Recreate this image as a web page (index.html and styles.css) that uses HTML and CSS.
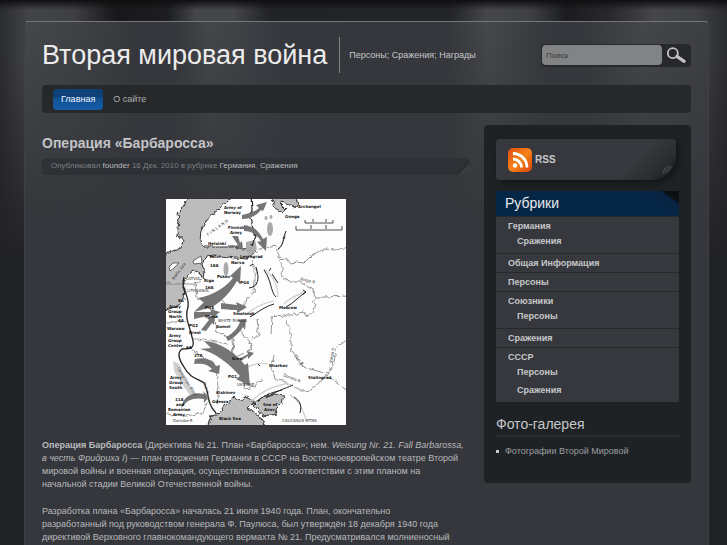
FILE: index.html
```html
<!DOCTYPE html>
<html lang="ru">
<head>
<meta charset="utf-8">
<title>Вторая мировая война</title>
<link rel="stylesheet" href="styles.css">
</head>
<body>
<div class="page">
  <header class="header">
    <h1 class="site-title">Вторая мировая война</h1>
    <p class="tagline">Персоны; Сражения; Награды</p>
    <form class="search">
      <input class="search-input" type="text" placeholder="Поиск" aria-label="Поиск">
      <button class="search-button" type="button" aria-label="Найти">
        <svg width="22" height="18" viewBox="0 0 22 18"><circle cx="7.500" cy="7" r="5.500" fill="none" stroke="#c2c3c5" stroke-width="2"/><path d="M12 10.500L20 16" stroke="#c2c3c5" stroke-width="3.400" stroke-linecap="round"/></svg>
      </button>
    </form>
  </header>
  <nav class="nav">
    <a class="nav-link active" href="#">Главная</a>
    <a class="nav-link" href="#">О сайте</a>
  </nav>
  <div class="columns">
    <main class="main">
      <h2 class="post-title">Операция «Барбаросса»</h2>
      <p class="meta">Опубликовал <a href="#">founder</a> 16 Дек. 2010 в рубрике <a href="#">Германия</a>, <a href="#">Сражения</a></p>
      <svg class="map" width="180" height="226" viewBox="0 0 180 226" role="img" aria-label="Карта">
        <defs><filter id="rough" filterUnits="userSpaceOnUse" x="0" y="0" width="180" height="226"><feTurbulence type="fractalNoise" baseFrequency=".2" numOctaves="2" seed="4"/><feDisplacementMap in="SourceGraphic" scale="5" xChannelSelector="R" yChannelSelector="G"/></filter></defs>
        <rect width="180" height="226" fill="#fdfdfd"/>
        <g filter="url(#rough)" fill="#bcbcbc" stroke="#222" stroke-width=".9">
          <path d="M22 -4L18 8 12 14 13 24 11 33 17 42 15 49 5 53 -4 57V112L10 108 18 101 19 90 17 86 21 77 27 72 34 75 37 80 38 72 36 65 41 57 48 56 69 59 81 60 89 53V48L77 50 68 48 38 48 34 42 35 31 41 20 53 10 69 -4Z"/>
          <path d="M41 230L45 216 54 214 59 207 67 198 74 202 80 198 88 203 82 209 92 216 101 230Z"/>
          <path d="M88 206L96 198 108 195 118 196 116 204 110 210 111 215 97 217Z"/>
          <path d="M105 -4L109 9 117 14 120 10 113 3 120 4 128 8 132 6 129 -4Z"/>
        </g>
        <g fill="#fdfdfd" stroke="#333" stroke-width=".7"><path d="M3 68L7 64 13 64 8 69 4 72ZM27 62L35 57 36 64 28 65Z"/></g>
        <g fill="#aaa"><ellipse cx="60" cy="70" rx="2.500" ry="7"/><ellipse cx="104" cy="30" rx="3" ry="7"/><ellipse cx="100" cy="19" rx="1.500" ry="2"/><ellipse cx="105" cy="18" rx="1.500" ry="2"/><path d="M80 43L89 41 91 50 85 56 80 52Z"/></g>
        <path d="M7 162L13 165 19 180 29 196 26 199 16 185 8 172Z" fill="#d0d0d0"/>
        <g filter="url(#rough)" fill="none" stroke="#777" stroke-width=".8">
          <path d="M91 54L97 47 105 48 110 47 114 61 120 59 123 65 130 63 138 64 145 57 157 50 169 51 182 48M114 61L117 69 115 76 122 82 133 82 145 89 150 98 160 98 182 97M121 122L125 138 125 150 137 168 155 173 165 180 182 192M182 140L170 149 168 164 158 179 145 191 137 192 120 184 109 180 105 168 108 157M0 85H29L35 80M29 85L31 99 45 105 49 94 51 103 56 102 63 110 77 111 81 99 88 93 90 72 86 61M0 123H20M46 105L51 133 68 140 67 156M26 139L62 145M60 158L80 169 78 190 88 188 95 180M150 98L147 113 141 118 138 112 127 116 118 116 106 118 105 136M91 120L93 135 84 143 86 150 70 158M66 137L67 160M74 132L86 145M27 152L48 165 53 186 51 205M43 198L37 214 20 217 0 215"/>
        </g>
        <path filter="url(#rough)" d="M85 -3L86 10 84 19 90 37 86 47" fill="none" stroke="#222" stroke-width="1.200"/>
        <path d="M18 78C14 90 24 96 22 108C18 118 24 128 26 138C30 150 24 150 16 150C10 154 14 162 18 168C24 180 34 180 38 184C44 194 40 204 50 214" fill="none" stroke="#222" stroke-width="1.300"/>
        <g fill="none" stroke="#ccc" stroke-width="1.200"><path d="M86 92C92 84 89 74 86 65M98 70C106 76 112 86 112 98M80 116C88 108 98 104 108 102M118 105C124 98 132 96 138 93M112 52L120 36M80 169C88 164 96 164 102 165M86 202C100 188 110 188 122 184M124 196C134 202 136 210 140 220"/></g>
        <g fill="none" stroke="#222" stroke-width="1">
          <path d="M83 89C92 88 94 80 90 68M98 71C106 82 104 92 110 98M106 75L112 84M84 118C94 112 98 108 108 105M120 108C128 104 132 98 140 93M112 50C118 46 116 42 119 38M86 206C98 196 104 194 116 191M100 199C110 192 118 190 127 186M128 198C134 202 136 206 134 214M105 69L103 72M87 65L84 67M137 91L140 93 137 95M92 165L94 167M120 32L117 40"/>
          <path d="M139 21V24H167V21M147 23V20M160 23V20M130 27V31H176V27M145 30V26M160 30V26" stroke-width=".8"/>
        </g>
        <g fill="#757575">
          <path d="M76 16C84 14 90 12 93 9L90 6 101 3 97 12 95 11C90 17 84 20 76 20Z"/><path d="M78 26C90 28 94 34 97 40L101 38 100 52 91 43 95 42C91 36 86 32 78 32Z"/>
          <path d="M66 37L72 46 69 47 77 51 76 42 74 44 72 37Z"/><path d="M32 99C48 96 60 88 67 79L64 77 75 67 74 85 71 82C64 94 56 102 46 108L28 113 38 103Z"/>
          <path d="M55 104L71 106 70 103 81 108 71 114 71 111 55 110Z"/><path d="M35 131L43 121 41 119 49 117 48 126 46 124 40 132Z"/>
          <path d="M60 138C68 134 72 128 74 123L71 121 80 120 79 131 77 128C73 134 69 138 62 142Z"/><path d="M28 113L45 113 44 110 54 113 46 119 46 116 28 120Z"/>
          <path d="M38 142C52 142 70 154 79 166L82 164 84 187 70 180 74 177C62 164 50 154 34 150L45 149Z"/>
          <path d="M29 160C38 158 46 160 50 167L54 166 53 175 42 172 46 170C42 165 36 164 28 165Z"/><path d="M15 209C17 197 27 192 38 195L37 192 43 198 38 204 38 200C28 198 21 201 17 207Z"/><path d="M73 160L82 155 81 152 88 154 82 160 82 157 75 162Z"/>
        </g>
        <g class="map-bold">
          <text x="58" y="10">Army of</text><text x="58" y="15">Norway</text><text x="62" y="30">Finnish</text><text x="64" y="35">Army</text>
          <text x="42" y="46">Helsinki</text><text x="43" y="59">Tallin</text><text x="65" y="65">Narva</text><text x="74" y="59">Leningrad</text><text x="44" y="68">18A</text><text x="74" y="85">PG4</text><text x="51" y="79">Pskov</text><text x="38" y="83">Riga</text><text x="39" y="90">16A</text>
          <text x="12" y="103">9A</text><text x="3" y="109">Army</text><text x="2" y="114">Group</text><text x="3" y="119">North</text><text x="12" y="123">4A</text><text x="23" y="128">PG2</text><text x="39" y="110">PG3</text><text x="39" y="119">Minsk</text><text x="67" y="116">Smolensk</text><text x="50" y="129">Gomel</text><text x="1" y="131">Warsaw</text><text x="3" y="138">Army</text><text x="2" y="143">Group</text><text x="2" y="148">Center</text><text x="23" y="135">Brest</text>
          <text x="20" y="150">6A</text><text x="28" y="158">17A</text><text x="66" y="161">Kiev</text><text x="4" y="180">Army</text><text x="3" y="185">Group</text><text x="3" y="190">South</text><text x="9" y="202">11A</text><text x="10" y="207">and</text><text x="2" y="212">Romanian</text><text x="7" y="217">Army</text>
          <text x="62" y="179">PG1</text><text x="50" y="195">Kishinev</text><text x="46" y="204">Odessa</text><text x="53" y="221">Black Sea</text><text x="97" y="207">Sea of</text><text x="98" y="212">Azov</text><text x="113" y="110">Moscow</text><text x="103" y="168">Kharkov</text><text x="142" y="180">Stalingrad</text><text x="132" y="9">Archangel</text><text x="119" y="19">Onega</text>
        </g>
        <g class="map-thin">
          <text x="42" y="37" transform="rotate(-35 42 37)">F  I  N  L  A  N  D</text><text x="8" y="81" transform="rotate(-53 8 81)">Baltic Sea</text><text x="20" y="81">LATVIA</text><text x="21" y="93">LITHUANIA</text><text x="52" y="123">WHITE RUSSIA</text><text x="71" y="187">UKRAINE</text><text x="116" y="223">CAUCASUS MTNS</text><text x="11" y="169" transform="rotate(58 11 169)">Carpathian Mtns</text><text x="37" y="183" transform="rotate(75 37 183)">Prut R</text><text x="7" y="223">Danube R</text><text x="128" y="157" transform="rotate(50 128 157)">Don R</text><text x="166" y="164" transform="rotate(-80 166 164)">Volga R</text><text x="117" y="177" transform="rotate(22 117 177)">Donets R</text><text x="134" y="81" transform="rotate(14 134 81)">Volga R</text>
        </g>
      </svg>
      <p class="text"><b>Операция Барбаросса</b> (Директива № 21. План «Барбаросса»; нем. <i>Weisung Nr. 21. Fall Barbarossa,<br>в честь Фридриха I</i>) — план вторжения Германии в СССР на Восточноевропейском театре Второй<br>мировой войны и военная операция, осуществлявшаяся в соответствии с этим планом на<br>начальной стадии Великой Отечественной войны.</p>
      <p class="text">Разработка плана «Барбаросса» началась 21 июля 1940 года. План, окончательно<br>разработанный под руководством генерала Ф. Паулюса, был утверждён 18 декабря 1940 года<br>директивой Верховного главнокомандующего вермахта № 21. Предусматривался молниеносный</p>
    </main>
    <aside class="sidebar">
      <a class="rss" href="#">
        <svg width="24" height="24" viewBox="0 0 24 24"><defs><linearGradient id="o" x1="0" y1="0" x2="1" y2="1"><stop offset="0" stop-color="#dc4a12"/><stop offset=".5" stop-color="#f48418"/><stop offset="1" stop-color="#d8440f"/></linearGradient></defs><rect width="24" height="24" rx="5" fill="url(#o)"/><circle cx="7" cy="17.500" r="2.200" fill="#fff"/><path d="M5 11A8.500 8.500 0 0 1 13.500 19.500M5 5.500A14 14 0 0 1 19 19.500" fill="none" stroke="#fff" stroke-width="2.800"/></svg>
        <span>RSS</span>
        <svg class="curl" width="16" height="16" viewBox="0 0 16 16"><path d="M3 14C3 8 7 6 12 7" fill="none" stroke="#4a4c50" stroke-width="1.200"/><path d="M3 14C4 9 8 7 12 7 10 11 7 13 3 14Z" fill="#36383c"/></svg>
      </a>
      <section class="categories">
        <h3 class="categories-title">Рубрики</h3>
        <ul class="cat-list">
          <li><a href="#">Германия</a><ul><li><a href="#">Сражения</a></li></ul></li>
          <li><a href="#">Общая Информация</a></li>
          <li><a href="#">Персоны</a></li>
          <li><a href="#">Союзники</a><ul><li><a href="#">Персоны</a></li></ul></li>
          <li><a href="#">Сражения</a></li>
          <li><a href="#">СССР</a><ul><li><a href="#">Персоны</a></li><li><a href="#">Сражения</a></li></ul></li>
        </ul>
      </section>
      <section>
        <h3 class="gallery-title">Фото-галерея</h3>
        <ul class="gallery-list"><li><a href="#">Фотографии Второй Мировой</a></li></ul>
      </section>
    </aside>
  </div>
</div>
</body>
</html>
```
FILE: styles.css
```css
* { box-sizing: border-box; margin: 0; padding: 0; }
html { height: 100%; overflow: hidden; }
body {
  min-height: 100%;
  display: flex;
  padding: 21px 18px 0 24px;
  font: 9px/13px "Liberation Sans", Arial, sans-serif;
  color: #b9babc;
  background:
    linear-gradient(#0f0f11 0, transparent 10px, transparent 60px, #212226 260px),
    linear-gradient(90deg, #2a2b2f 0, #434448 4%, #3f4044 10%, #18181b 16%, #1c1d20 23%, #45464a 27%, #45464a 32%, #222326 37%, #232428 50%, #232428 62%, #46474a 67%, #3f4044 73%, #1b1c1f 78%, #29292d 84%, #45464a 90%, #3f4044 96%, #2a2b2f 100%);
}
a { color: inherit; text-decoration: none; }
ul { list-style: none; }
.page {
  flex: 1;
  padding: 15px 17px 0;
  border: 1px solid #3e4045;
  border-top-color: #74767a;
  border-bottom: 0;
  border-radius: 4px 4px 0 0;
  background:
    linear-gradient(transparent 0, #35373c 190px),
    linear-gradient(90deg, #46474b 0, #404145 8%, #36373c 16%, #36373c 22%, #45464a 27%, #404146 32%, #35373c 38%, #35373c 62%, #47484b 68%, #37383d 76%, #36373c 82%, #45464a 90%, #3e3f44 100%);
}
.header { display: flex; align-items: center; height: 36px; }
.site-title { font-size: 27px; line-height: 36px; font-weight: 400; color: #ececec; white-space: nowrap; }
.tagline { margin-left: 12px; padding-left: 9px; border-left: 1px solid #85878a; line-height: 36px; color: #c6c7c9; white-space: nowrap; }
.search { display: flex; align-items: center; margin-left: auto; width: 150px; height: 23px; padding: 0 1px; border-radius: 4px; background: #27282a; }
.search-input { flex: 1; min-width: 0; height: 20px; padding: 0 4px; border: 0; border-radius: 4px; background: #828385; color: #37383a; font: inherit; font-size: 8px; }
.search-input::placeholder { color: #37383a; opacity: 1; }
.search-button { display: flex; width: 28px; height: 20px; padding: 1px 4px; border: 0; background: none; }
.nav { display: flex; align-items: center; gap: 1px; height: 28px; margin-top: 12px; padding: 0 11px; border-radius: 4px; background: #27282a; }
.nav-link { padding: 0 9px; line-height: 19px; color: #aeafb1; }
.nav-link.active { padding: 1px 8px; border-radius: 4px; color: #f0f3f6; background: linear-gradient(#0d4177 35%, #125398 50%, #155ca5); }
.columns { display: flex; align-items: flex-start; gap: 14px; margin-top: 12px; }
.main { flex: 1; min-width: 0; }
.post-title { margin-top: 10px; font-size: 14px; line-height: 16px; color: #c3c4c7; }
.meta { margin-top: 7px; padding: 0 9px; height: 17px; line-height: 16px; font-size: 8px; border-radius: 4px 4px 9px 4px; color: #7d7f83; background: linear-gradient(315deg, #3a3c40 8px, #2a2c30 9px, transparent 14px), #2e3135; }
.meta a { color: #b9babc; }
.map { display: block; margin: 24px auto 14px; }
.map-bold, .map-thin { font: bold 4px "DejaVu Sans", Verdana, sans-serif; fill: #111; }
.map-thin { font-weight: 400; fill: #333; white-space: pre; }
.text { margin-bottom: 14px; white-space: nowrap; }
.sidebar { width: 207px; padding: 14px 12px 25px; border-radius: 4px; background: #1e2225; }
.rss { position: relative; display: flex; align-items: center; gap: 3px; height: 41px; margin-right: 3px; padding-left: 12px; border-radius: 4px 4px 24px 4px; background: linear-gradient(315deg, #1d1f22 8px, #2a2c30 20px, #36383d 42px); box-shadow: 3px 3px 5px #141618; font-size: 10px; font-weight: 700; color: #c6c7c9; }
.curl { position: absolute; right: 0; bottom: 4px; }
.categories { margin-top: 11px; background: #36383d; }
.categories-title { height: 25px; padding: 0 9px; font-size: 14px; line-height: 24px; font-weight: 400; color: #e8ebee; background: linear-gradient(215deg, #0d1013 7%, #0a2240 9%, transparent 17%), #062647; }
.cat-list > li { border-top: 1px solid #27282b; padding-left: 12px; }
.cat-list a { display: block; line-height: 18px; font-weight: 700; color: #c6c7c9; }
.cat-list ul { margin-top: -3px; padding: 0 0 3px 9px; }
.gallery-title { margin-top: 14px; padding-bottom: 3px; border-bottom: 2px solid #292b2e; font-size: 14px; line-height: 16px; font-weight: 400; color: #c6c7c9; }
.gallery-list { margin-top: 8px; }
.gallery-list li { display: flex; align-items: center; gap: 6px; color: #9b9da0; }
.gallery-list li::before { content: ""; width: 3px; height: 3px; background: #c6c7c9; }
```
